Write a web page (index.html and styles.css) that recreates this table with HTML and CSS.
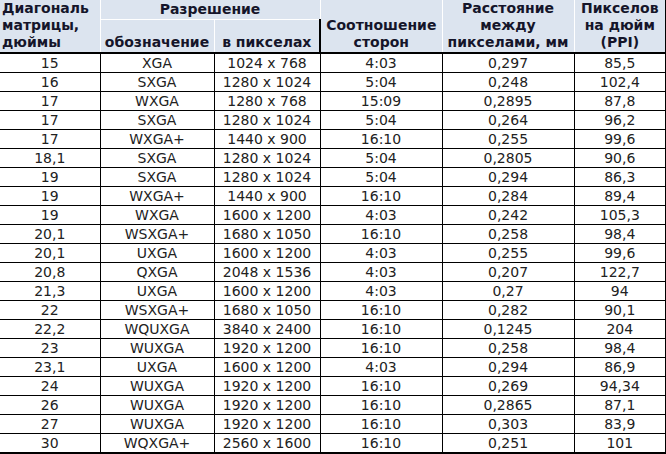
FILE: index.html
```html
<!DOCTYPE html>
<html lang="ru">
<head>
<meta charset="utf-8">
<title>Мониторы</title>
<link rel="stylesheet" href="styles.css">
</head>
<body>
<table class="spec">
  <colgroup>
    <col class="c1"><col class="c2"><col class="c3"><col class="c4"><col class="c5"><col class="c6">
  </colgroup>
  <thead>
    <tr class="hr1">
      <th rowspan="2" class="h-diag">Диагональ<br>матрицы,<br>дюймы</th>
      <th colspan="2" class="h-res">Разрешение</th>
      <th rowspan="2">Соотношение<br>сторон</th>
      <th rowspan="2">Расстояние<br>между<br>пикселами, мм</th>
      <th rowspan="2">Пикселов<br>на дюйм<br>(PPI)</th>
    </tr>
    <tr class="hr2">
      <th>обозначение</th>
      <th>в пикселах</th>
    </tr>
  </thead>
  <tbody>
    <tr><td>15</td><td>XGA</td><td>1024 x 768</td><td>4:03</td><td>0,297</td><td>85,5</td></tr>
    <tr><td>16</td><td>SXGA</td><td>1280 x 1024</td><td>5:04</td><td>0,248</td><td>102,4</td></tr>
    <tr><td>17</td><td>WXGA</td><td>1280 x 768</td><td>15:09</td><td>0,2895</td><td>87,8</td></tr>
    <tr><td>17</td><td>SXGA</td><td>1280 x 1024</td><td>5:04</td><td>0,264</td><td>96,2</td></tr>
    <tr><td>17</td><td>WXGA+</td><td>1440 x 900</td><td>16:10</td><td>0,255</td><td>99,6</td></tr>
    <tr><td>18,1</td><td>SXGA</td><td>1280 x 1024</td><td>5:04</td><td>0,2805</td><td>90,6</td></tr>
    <tr><td>19</td><td>SXGA</td><td>1280 x 1024</td><td>5:04</td><td>0,294</td><td>86,3</td></tr>
    <tr><td>19</td><td>WXGA+</td><td>1440 x 900</td><td>16:10</td><td>0,284</td><td>89,4</td></tr>
    <tr><td>19</td><td>WXGA</td><td>1600 x 1200</td><td>4:03</td><td>0,242</td><td>105,3</td></tr>
    <tr><td>20,1</td><td>WSXGA+</td><td>1680 x 1050</td><td>16:10</td><td>0,258</td><td>98,4</td></tr>
    <tr><td>20,1</td><td>UXGA</td><td>1600 x 1200</td><td>4:03</td><td>0,255</td><td>99,6</td></tr>
    <tr><td>20,8</td><td>QXGA</td><td>2048 x 1536</td><td>4:03</td><td>0,207</td><td>122,7</td></tr>
    <tr><td>21,3</td><td>UXGA</td><td>1600 x 1200</td><td>4:03</td><td>0,27</td><td>94</td></tr>
    <tr><td>22</td><td>WSXGA+</td><td>1680 x 1050</td><td>16:10</td><td>0,282</td><td>90,1</td></tr>
    <tr><td>22,2</td><td>WQUXGA</td><td>3840 x 2400</td><td>16:10</td><td>0,1245</td><td>204</td></tr>
    <tr><td>23</td><td>WUXGA</td><td>1920 x 1200</td><td>16:10</td><td>0,258</td><td>98,4</td></tr>
    <tr><td>23,1</td><td>UXGA</td><td>1600 x 1200</td><td>4:03</td><td>0,294</td><td>86,9</td></tr>
    <tr><td>24</td><td>WUXGA</td><td>1920 x 1200</td><td>16:10</td><td>0,269</td><td>94,34</td></tr>
    <tr><td>26</td><td>WUXGA</td><td>1920 x 1200</td><td>16:10</td><td>0,2865</td><td>87,1</td></tr>
    <tr><td>27</td><td>WUXGA</td><td>1920 x 1200</td><td>16:10</td><td>0,303</td><td>83,9</td></tr>
    <tr><td>30</td><td>WQXGA+</td><td>2560 x 1600</td><td>16:10</td><td>0,251</td><td>101</td></tr>
  </tbody>
</table>
</body>
</html>
```

FILE: styles.css
```css
html, body {
  margin: 0;
  padding: 0;
  background: #ffffff;
  overflow: hidden;
}

.spec {
  border-collapse: collapse;
  table-layout: fixed;
  width: 666px;
  font-family: "DejaVu Sans", Verdana, sans-serif;
  color: #1c1c1c;
}

.c1 { width: 100px; }
.c2 { width: 114px; }
.c3 { width: 106px; }
.c4 { width: 122px; }
.c5 { width: 132px; }
.c6 { width: 92px; }

.spec th {
  background: #dce4ef;
  font-weight: bold;
  font-size: 14px;
  line-height: 17px;
  color: #15152a;
  text-align: center;
  vertical-align: bottom;
  padding: 0 1px;
  border: 1px solid #ffffff;
  white-space: nowrap;
}

.spec thead tr.hr1 th { border-top: none; }
.spec thead th:first-child { border-left: none; }
.spec thead th:last-child { border-right: 2px solid #000000; }

.spec th.h-diag {
  text-align: left;
  padding-left: 2px;
}

.spec tr.hr1 th.h-res {
  vertical-align: middle;
  height: 19px;
}

.spec tr.hr2 th {
  height: 31px;
  padding-bottom: 1px;
  border-bottom: 2px solid #000000;
}
.spec tr.hr1 th[rowspan] {
  border-bottom: 2px solid #000000;
  padding-bottom: 1px;
}

.spec td {
  font-size: 14px;
  line-height: 18px;
  height: 18px;
  padding: 0;
  text-align: center;
  vertical-align: middle;
  border: 1px solid #000000;
  color: #222222;
  white-space: nowrap;
}

.spec td:first-child { border-left: none; }
.spec td:last-child { border-right: 2px solid #000000; }
.spec tbody tr:last-child td { border-bottom: 3px solid #000000; }
```
